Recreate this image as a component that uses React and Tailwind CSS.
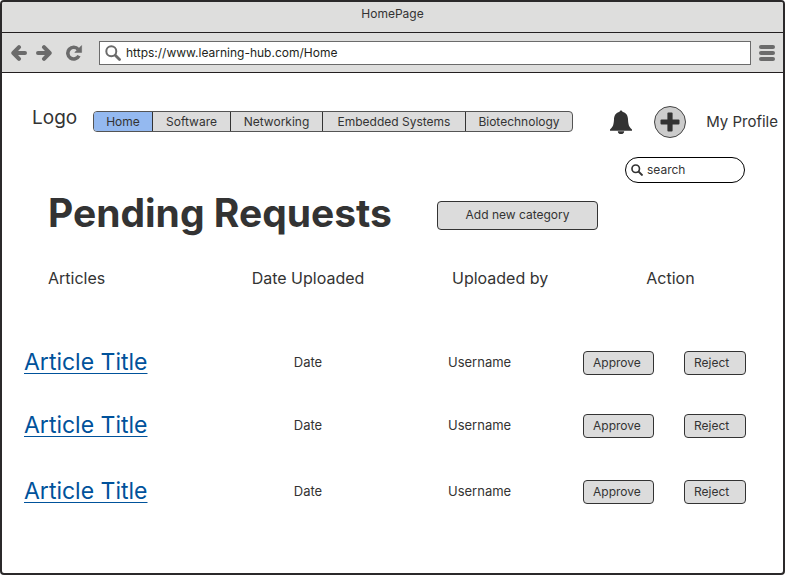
const tabs = [
  { name: "Home", width: "w-[58px]" },
  { name: "Software", width: "w-[78px]" },
  { name: "Networking", width: "w-[92px]" },
  { name: "Embedded Systems", width: "w-[143px]" },
  { name: "Biotechnology", width: "w-[107px]" },
];

const articles = [
  { id: 1, height: "h-[63px]" },
  { id: 2, height: "h-[63px]" },
  { id: 3, height: "h-[69px]" },
];

function Arrow({ className = "" }) {
  return (
    <svg viewBox="0 0 16 16" className={`size-4 ${className}`} fill="none" stroke="currentColor" strokeWidth="4" strokeLinecap="round" strokeLinejoin="round" aria-hidden="true">
      <path d="M8 2.200 2.300 8 8 13.800M3 8h11" />
    </svg>
  );
}

function Magnifier({ className, strokeWidth }) {
  return (
    <svg viewBox="0 0 16 16" className={className} fill="none" stroke="currentColor" strokeLinecap="round" aria-hidden="true">
      <circle cx="6.3" cy="6.3" r="5" strokeWidth={strokeWidth} />
      <path d="m10.5 10.5 4 4" strokeWidth="2.8" />
    </svg>
  );
}

function BrowserBar() {
  return (
    <div className="flex h-10 items-center border-b border-[#231f20] bg-[#dededd] pl-[9px] pr-2 text-[#6b6b6b]">
      <button type="button" aria-label="Back"><Arrow /></button>
      <button type="button" aria-label="Forward" className="ml-[9px]"><Arrow className="rotate-180" /></button>
      <button type="button" aria-label="Reload" className="ml-[13px]">
        <svg viewBox="0 0 18 16" className="h-4 w-[18px]" aria-hidden="true">
          <path d="M13.200 4.300A5.900 5.900 0 1 0 14 10.800" fill="none" stroke="currentColor" strokeWidth="3.6" />
          <path d="M16.600 .6v6.800H9.800z" fill="currentColor" stroke="currentColor" strokeWidth=".6" strokeLinejoin="round" />
        </svg>
      </button>
      <label className="ml-4 flex h-6 min-w-0 flex-1 items-center border border-[#6b6b6b] bg-white pl-[5px]">
        <Magnifier className="size-4 shrink-0" strokeWidth="2" />
        <input type="text" aria-label="Address" defaultValue="https://www.learning-hub.com/Home" className="ml-[5px] min-w-0 flex-1 bg-transparent text-[12px] leading-4 text-[#231f20] outline-none" />
      </label>
      <button type="button" aria-label="Menu" className="ml-2 flex w-4 flex-col gap-[2px]">
        <span className="h-1 rounded-full bg-current" />
        <span className="h-1 rounded-full bg-current" />
        <span className="h-1 rounded-full bg-current" />
      </button>
    </div>
  );
}

function Header() {
  return (
    <header className="flex h-8 items-center pl-[30px] pr-[5px]">
      <span className="w-[61px] pb-2 text-[19px] leading-6">Logo</span>
      <nav className="mb-px flex h-[21px] overflow-hidden rounded border border-[#545454] bg-[#dcdcdc]">
        {tabs.map((tab, i) => (
          <a
            key={tab.name}
            href="#"
            className={`flex items-center justify-center whitespace-nowrap text-[12px] leading-4 ${tab.width} ${i === 0 ? "bg-[#94b9f0]" : "border-l border-[#333]"}`}
          >
            {tab.name}
          </a>
        ))}
      </nav>
      <div className="ml-auto flex items-center">
        <button type="button" aria-label="Notifications">
          <svg viewBox="0 0 22 24" className="h-6 w-[22px]" fill="currentColor" aria-hidden="true">
            <path d="M9.600 1.800a1.400 1.400 0 0 1 2.800 0C16 2.600 17.800 5.500 18 9c.2 5.500 1 8 4 10.500v1.200H0v-1.200C3 17 3.800 14.500 4 9c.2-3.500 2-6.400 5.600-7.200z" />
            <path d="M7.800 21.200a3.200 2.800 0 0 0 6.400 0z" />
          </svg>
        </button>
        <button type="button" aria-label="Add" className="ml-[22px] flex size-8 items-center justify-center rounded-full border border-[#444] bg-[#ccc]">
          <svg viewBox="0 0 20 20" className="size-5" fill="currentColor" aria-hidden="true">
            <rect x="7.4" y=".5" width="5.2" height="19" rx="1" />
            <rect x=".5" y="7.400" width="19" height="5.200" rx="1" />
          </svg>
        </button>
        <a href="#" className="ml-5 whitespace-nowrap text-[15px] leading-5">My Profile</a>
      </div>
    </header>
  );
}

function ActionButton({ children, className }) {
  return (
    <button type="button" className={`h-6 rounded border border-[#333] bg-[#dcdcdc] pl-[9px] text-left text-[12px] leading-4 ${className}`}>
      {children}
    </button>
  );
}

export default function App() {
  return (
    <div className="flex min-h-screen flex-col overflow-hidden rounded border-2 border-[#2b292a] bg-white font-['Inter','Noto_Sans',sans-serif] text-[#333]">
      <div className="h-[31px] border-b border-[#231f20] bg-[#dededd] pt-1 text-center text-[12px] leading-4">HomePage</div>
      <BrowserBar />
      <main className="pt-[33px]">
        <Header />
        <div className="mt-[19px] flex justify-end pr-[38px]">
          <label className="flex h-[26px] w-[120px] items-center rounded-full border border-black pl-[5px]">
            <Magnifier className="size-3 shrink-0" strokeWidth="2.2" />
            <input type="search" aria-label="Search" placeholder="search" className="ml-1 w-20 bg-transparent text-[12px] leading-4 outline-none placeholder:text-[#333]" />
          </label>
        </div>
        <div className="mt-[10px] flex items-center pl-[46px]">
          <h1 className="w-[389px] whitespace-nowrap pb-1 text-[39px] font-bold leading-10">Pending Requests</h1>
          <button type="button" className="h-[29px] w-[161px] rounded border border-[#333] bg-[#dcdcdc] text-[12px] leading-4">Add new category</button>
        </div>
        <div className="mt-[29px] pl-[22px] pr-[37px]">
          <table className="w-full table-fixed text-left text-[13px] leading-4">
            <colgroup>
              <col className="w-36" />
              <col />
              <col className="w-[135px]" />
              <col className="w-[163px]" />
            </colgroup>
            <thead className="text-base leading-6">
              <tr className="h-16 align-top">
                <th className="pl-6 font-normal">Articles</th>
                <th className="text-center font-normal">Date Uploaded</th>
                <th className="whitespace-nowrap pl-1 font-normal">Uploaded by</th>
                <th className="pl-3 text-center font-normal">Action</th>
              </tr>
            </thead>
            <tbody>
              {articles.map((article) => (
                <tr key={article.id} className={article.height}>
                  <td>
                    <a href="#" className="whitespace-nowrap text-[23px] leading-7 text-[#00529b] underline decoration-1 underline-offset-3">Article Title</a>
                  </td>
                  <td className="text-center">Date</td>
                  <td>Username</td>
                  <td className="pt-0.5">
                    <div className="flex justify-between">
                      <ActionButton className="w-[71px]">Approve</ActionButton>
                      <ActionButton className="w-[62px]">Reject</ActionButton>
                    </div>
                  </td>
                </tr>
              ))}
            </tbody>
          </table>
        </div>
      </main>
    </div>
  );
}
